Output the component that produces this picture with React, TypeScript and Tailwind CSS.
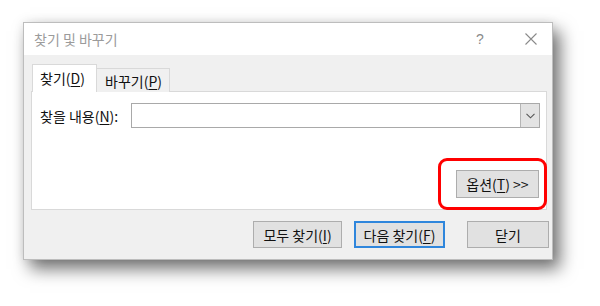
import React from "react";

const font = { fontFamily: '"Noto Sans CJK KR", "Noto Sans", sans-serif' };

function U({ c }: { c: string }) {
  return <span className="underline underline-offset-[2px]">{c}</span>;
}

export default function App() {
  return (
    <div className="w-[600px] h-[306px] bg-white pt-[22px] pl-[23px] text-[14px] leading-none text-[#111]" style={font}>
      <div className="relative w-[530px] h-[238px] border border-[#bdbdbd] flex flex-col shadow-[7px_9px_16px_rgba(0,0,0,0.55),0_0_10px_rgba(0,0,0,0.08)]">
        {/* title bar */}
        <div className="h-[32px] bg-white flex items-center pl-[10px] shrink-0">
          <span className="text-[#9b9b9b] text-[14px] flex-1 leading-none">찾기 및 바꾸기</span>
          <span className="text-[#8a8a8a] text-[14px] w-[12px] text-center mr-[39px] leading-none" style={{ fontFamily: '"Liberation Sans", sans-serif' }}>?</span>
          <svg width="12" height="12" viewBox="0 0 12 12" className="mr-[15px]">
            <path d="M0.5 0.5 L11.5 11.5 M11.5 0.5 L0.5 11.5" stroke="#8a8a8a" strokeWidth="1.1" fill="none" />
          </svg>
        </div>
        {/* body */}
        <div className="flex-1 bg-[#f0f0f0] flex flex-col pt-[9px]">
          <div className="flex items-end ml-[8px] h-[28px] relative z-10">
            <div className="w-[65px] h-[28px] bg-white border border-b-0 border-[#d9d9d9] flex items-center pl-[7px] pb-[1px]">
              찾기(<U c="D" />)
            </div>
            <div className="w-[73px] h-[24px] bg-[#f0f0f0] border border-l-0 border-b-0 border-[#d9d9d9] flex items-center pl-[8px]">
              바꾸기(<U c="P" />)
            </div>
          </div>
          <div className="ml-[7px] w-[516px] h-[119px] -mt-px bg-white border border-[#d9d9d9] flex flex-col pt-[11px] pl-[8px] pr-[6px] pb-[11px]">
            <div className="flex items-center h-[25px]">
              <span className="w-[91px] shrink-0">찾을 내용(<U c="N" />):</span>
              <div className="flex-1 h-[25px] border border-[#a9a9a9] bg-white flex justify-end">
                <div className="w-[19px] h-full bg-[#e3e3e3] border-l border-[#b5b5b5] flex items-center justify-center">
                  <svg width="9" height="6" viewBox="0 0 9 6">
                    <path d="M0.5 0.8 L4.5 4.8 L8.5 0.8" stroke="#555" strokeWidth="1.1" fill="none" />
                  </svg>
                </div>
              </div>
            </div>
            <div className="flex-1" />
            <div className="flex justify-end pr-[1px]">
              <div className="w-[83px] h-[28px] bg-[#e1e1e1] border border-[#adadad] flex items-center justify-center">
                옵션(<U c="T" />)&nbsp;&gt;&gt;
              </div>
            </div>
          </div>
          <div className="flex justify-end mt-[11px] pr-[3px]">
            <div className="w-[89px] h-[27px] bg-[#e1e1e1] border border-[#adadad] flex items-center justify-center">
              모두 찾기(<U c="I" />)
            </div>
            <div className="w-[91px] h-[27px] ml-[12px] bg-[#e1e1e1] border-2 border-[#2f86dc] flex items-center justify-center">
              다음 찾기(<U c="F" />)
            </div>
            <div className="w-[82px] h-[27px] ml-[22px] bg-[#e1e1e1] border border-[#adadad] flex items-center justify-center">
              닫기
            </div>
          </div>
        </div>
        {/* red annotation */}
        <div className="absolute left-[414px] top-[135px] w-[109px] h-[52px] border-[3px] border-[#ff0000] rounded-[9px]" />
      </div>
    </div>
  );
}
